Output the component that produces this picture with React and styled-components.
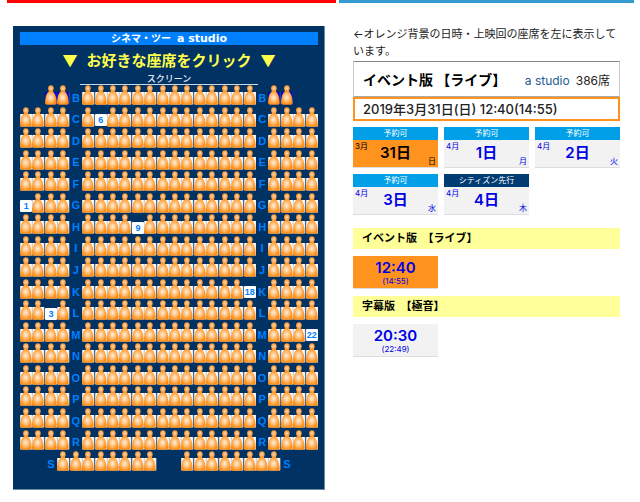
import React from "react";
import styled, { createGlobalStyle } from "styled-components";

const GlobalStyle = createGlobalStyle`
  *, *::before, *::after { box-sizing: border-box; }
  body {
    margin: 0;
    background: #fff;
    color: #222;
    font-family: Inter, "Noto Sans CJK JP", sans-serif;
    font-size: 11px;
  }
  h1, h2, p { margin: 0; }
  a { text-decoration: none; }
`;

const Page = styled.main`
  display: grid;
  grid-template-columns: 329fr 295fr;
  gap: 3px;
  align-items: start;
  padding: 0 6px 0 7px;
`;

const Column = styled.section`
  border-top: 3px solid ${(p) => p.$accent};
  padding: 23px ${(p) => p.$right} 13px ${(p) => p.$left};
`;

/* Seat map */

const SeatPanel = styled.div`
  background: #003264;
  border-right: 1px solid #6d89a6;
  border-bottom: 1px solid #6d89a6;
  padding: 6px 6px 16px 7px;
`;

const TheaterName = styled.h1`
  background: #007fff;
  color: #fff;
  font: bold 11px/13px "DejaVu Sans", "Noto Sans CJK JP", sans-serif;
  display: flex;
  justify-content: center;
  gap: 6px;
`;

const TheaterBrand = styled.span`
  font-size: 10px;
`;

const Prompt = styled.h2`
  display: flex;
  justify-content: center;
  gap: 9px;
  margin-top: 5px;
  color: #ffff4b;
  font: bold 15px/20px "Noto Sans CJK JP", sans-serif;
`;

const Screen = styled.div`
  width: 60%;
  margin: 3px auto 0;
  border-bottom: 1px solid #cbd5e0;
  color: #e4eaf1;
  font: 500 9px/11px "Noto Sans CJK JP", sans-serif;
  text-align: center;
`;

const SeatGrid = styled.div`
  display: grid;
  grid-template-columns: repeat(24, minmax(0, 1fr));
`;

const SeatDrawing = styled.svg`
  display: block;
  width: 100%;
`;

const SharedPaint = styled.svg`
  display: block;
`;

const RowLabel = styled.span`
  display: flex;
  align-items: center;
  justify-content: center;
  padding-top: 4px;
  color: #007fff;
  font: bold 11px/12px "Liberation Sans", sans-serif;
`;

const OpenSeat = styled.button`
  align-self: end;
  height: 12px;
  margin: 0 0 2px;
  padding: 0;
  border: 0;
  border-radius: 1px;
  background: #fff;
  color: #007fff;
  font: bold 9px/12px "Liberation Sans", sans-serif;
  text-align: center;
  cursor: pointer;
`;

/* Schedule */

const Intro = styled.p`
  line-height: 17px;
  margin-bottom: 1px;
`;

const FilmBar = styled.div`
  display: flex;
  align-items: baseline;
  justify-content: space-between;
  height: 36px;
  padding: 0 9px;
  border: 1px solid #ccc;
  border-top-color: #888;
  border-bottom-color: #aaa;
  font-size: 12px;
  line-height: 35px;
`;

const FilmTitle = styled.h2`
  color: #000;
  font-size: 14px;
  font-weight: bold;
  white-space: pre;
`;

const Venue = styled.span`
  display: flex;
  align-items: baseline;
  gap: 6px;
`;

const VenueLink = styled.a`
  color: #235a94;
`;

const CurrentShow = styled.p`
  border: 2px solid #ff931e;
  padding: 0 8px;
  font-size: 13px;
  font-weight: 500;
  line-height: 20px;
`;

const CardGrid = styled.div`
  display: grid;
  grid-template-columns: repeat(3, minmax(0, 1fr));
  gap: 6px;
  margin: ${(p) => p.$margin};
`;

const DayCard = styled.a`
  display: block;
  color: ${(p) => (p.$selected ? "#000" : "#0000e6")};
  background: ${(p) => (p.$selected ? "#ff931e" : "#f2f2f2")};
  border-bottom: 1px solid #ddd;
`;

const DayStatus = styled.div`
  background: ${(p) => (p.$citizen ? "#003c72" : "#009fe8")};
  color: #fff;
  font-size: 8px;
  line-height: 13px;
  text-align: center;
`;

const DayBody = styled.div`
  display: grid;
  grid-template-columns: 1fr auto 1fr;
  height: 27px;
  padding: 0 2px;
`;

const DayNumber = styled.span`
  font-size: 15px;
  font-weight: 600;
  line-height: 26px;
`;

const Corner = styled.span`
  align-self: ${(p) => (p.$end ? "end" : "start")};
  justify-self: ${(p) => (p.$end ? "end" : "start")};
  font-size: 8px;
  line-height: 12px;
`;

const VersionHeading = styled.h2`
  background: #ffff99;
  color: #000;
  padding: 0 9px;
  font-size: 11px;
  font-weight: bold;
  line-height: 21px;
  white-space: pre;
`;

const TimeCard = styled.a`
  display: flex;
  flex-direction: column;
  align-items: center;
  padding: 4px 0 1px;
  background: ${(p) => (p.$selected ? "#ff931e" : "#f2f2f2")};
  border-bottom: 1px solid #ddd;
  color: #0000e6;
`;

const StartTime = styled.span`
  font-size: 15px;
  font-weight: 600;
  line-height: 16px;
`;

const EndTime = styled.span`
  font-size: 8px;
  line-height: 11px;
`;

const range = (from, to) =>
  Array.from({ length: to - from + 1 }, (_, i) => from + i);

const fullRow = [...range(1, 4), ...range(6, 19), ...range(21, 24)];

const openSeats = {
  C: { column: 7, number: 6 },
  G: { column: 1, number: 1 },
  H: { column: 10, number: 9 },
  K: { column: 19, number: 18 },
  L: { column: 3, number: 3 },
  M: { column: 24, number: 22 },
};

const specialRows = {
  B: { seats: [3, 4, ...range(6, 19), 21, 22], labels: [5, 20] },
  S: { seats: [...range(4, 11), ...range(14, 21)], labels: [3, 22] },
};

const seatRows = "BCDEFGHIJKLMNOPQRS".split("").map((name) => ({
  name,
  seats: fullRow,
  labels: [5, 20],
  ...specialRows[name],
}));

function TakenSeat({ chair }) {
  return (
    <SeatDrawing viewBox="0 0 124 215" aria-hidden="true">
      <rect x="2" y="70" width="120" height="124" rx="6" fill={chair} />
      <rect x="117" y="74" width="7" height="118" fill="#8799ad" opacity="0.6" />
      <path
        d="M38 54C44 68 18 72 9 112Q1 146 0 180Q2 198 20 198H98Q117 197 117 178Q114 138 106 110C98 74 74 68 80 54Z"
        fill="url(#seat-body)"
      />
      <ellipse cx="59" cy="34" rx="28" ry="31" fill="url(#seat-head)" />
    </SeatDrawing>
  );
}

function SeatRow({ row }) {
  const open = openSeats[row.name];
  return range(1, 24).map((column) => {
    if (row.labels.includes(column)) {
      return <RowLabel key={column}>{row.name}</RowLabel>;
    }
    if (open && open.column === column) {
      return (
        <OpenSeat key={column} type="button" aria-label={`${row.name}-${open.number}`}>
          {open.number}
        </OpenSeat>
      );
    }
    if (row.seats.includes(column)) {
      const wheelchair = row.name === "B" && (column < 5 || column > 20);
      return <TakenSeat key={column} chair={wheelchair ? "#0000d8" : "#fff"} />;
    }
    return <span key={column} />;
  });
}

function Gradients() {
  return (
    <SharedPaint width="0" height="0" aria-hidden="true">
      <defs>
        <radialGradient id="seat-body" cx="0.48" cy="0.5" r="0.52">
          <stop offset="0" stopColor="#fff0dd" />
          <stop offset="0.4" stopColor="#ffc88c" />
          <stop offset="0.9" stopColor="#ff931e" />
          <stop offset="1" stopColor="#ff8c12" />
        </radialGradient>
        <radialGradient id="seat-head">
          <stop offset="0" stopColor="#ffdcb4" />
          <stop offset="1" stopColor="#f8912c" />
        </radialGradient>
      </defs>
    </SharedPaint>
  );
}

const days = [
  { month: "3月", day: "31日", weekday: "日", status: "予約可", selected: true },
  { month: "4月", day: "1日", weekday: "月", status: "予約可" },
  { month: "4月", day: "2日", weekday: "火", status: "予約可" },
  { month: "4月", day: "3日", weekday: "水", status: "予約可" },
  { month: "4月", day: "4日", weekday: "木", status: "シティズン先行", citizen: true },
];

const versions = [
  { name: "イベント版　【ライブ】", start: "12:40", end: "(14:55)", selected: true },
  { name: "字幕版　【極音】", start: "20:30", end: "(22:49)" },
];

export default function App() {
  return (
    <>
      <GlobalStyle />
      <Page>
        <Column $accent="#ff0000" $left="6px" $right="11px">
          <SeatPanel>
            <TheaterName>
              <TheaterBrand>シネマ・ツー</TheaterBrand>
              <span>a studio</span>
            </TheaterName>
            <Prompt>
              <span>▼</span>
              <span>お好きな座席をクリック</span>
              <span>▼</span>
            </Prompt>
            <Screen>スクリーン</Screen>
            <Gradients />
            <SeatGrid>
              {seatRows.map((row) => (
                <SeatRow key={row.name} row={row} />
              ))}
            </SeatGrid>
          </SeatPanel>
        </Column>
        <Column $accent="#369bd2" $left="14px" $right="14px">
          <Intro>←オレンジ背景の日時・上映回の座席を左に表示しています。</Intro>
          <FilmBar>
            <FilmTitle>イベント版 【ライブ】</FilmTitle>
            <Venue>
              <VenueLink href="#studio">a studio</VenueLink>
              <span>386席</span>
            </Venue>
          </FilmBar>
          <CurrentShow>2019年3月31日(日) 12:40(14:55)</CurrentShow>
          <CardGrid $margin="6px 0 13px">
            {days.map((d) => (
              <DayCard key={d.day} href="#day" $selected={d.selected}>
                <DayStatus $citizen={d.citizen}>{d.status}</DayStatus>
                <DayBody>
                  <Corner>{d.month}</Corner>
                  <DayNumber>{d.day}</DayNumber>
                  <Corner $end>{d.weekday}</Corner>
                </DayBody>
              </DayCard>
            ))}
          </CardGrid>
          {versions.map((v) => (
            <React.Fragment key={v.name}>
              <VersionHeading>{v.name}</VersionHeading>
              <CardGrid $margin="7px 0">
                <TimeCard href="#time" $selected={v.selected}>
                  <StartTime>{v.start}</StartTime>
                  <EndTime>{v.end}</EndTime>
                </TimeCard>
              </CardGrid>
            </React.Fragment>
          ))}
        </Column>
      </Page>
    </>
  );
}
